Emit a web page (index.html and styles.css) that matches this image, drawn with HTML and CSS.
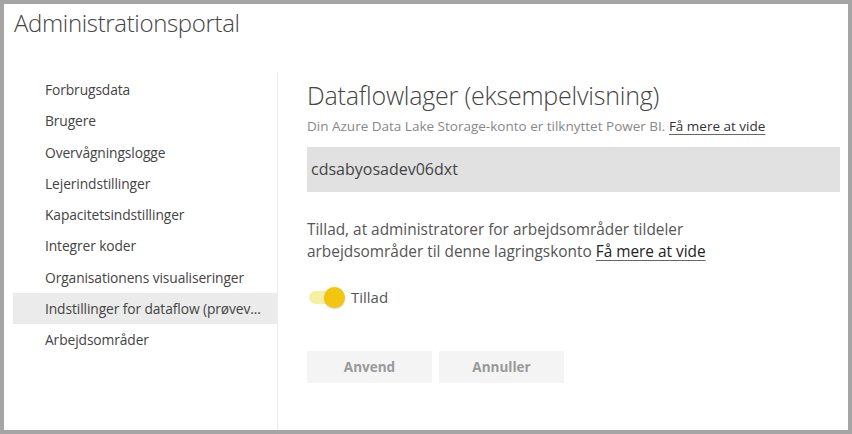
FILE: index.html
```html
<!DOCTYPE html>
<html lang="da">
<head>
<meta charset="utf-8">
<link rel="stylesheet" href="styles.css">
</head>
<body>
<div class="window">
  <header class="header">
    <h1 class="title">Administrationsportal</h1>
  </header>
  <div class="content">
    <nav class="sidebar">
      <ul class="nav">
        <li class="nav-item">Forbrugsdata</li>
        <li class="nav-item">Brugere</li>
        <li class="nav-item">Overvågningslogge</li>
        <li class="nav-item">Lejerindstillinger</li>
        <li class="nav-item">Kapacitetsindstillinger</li>
        <li class="nav-item">Integrer koder</li>
        <li class="nav-item">Organisationens visualiseringer</li>
        <li class="nav-item active">Indstillinger for dataflow (prøvev...</li>
        <li class="nav-item">Arbejdsområder</li>
      </ul>
    </nav>
    <main class="main">
      <h2 class="heading">Dataflowlager (eksempelvisning)</h2>
      <p class="subtitle">Din Azure Data Lake Storage-konto er tilknyttet Power BI. <a class="link">Få mere at vide</a></p>
      <div class="field">cdsabyosadev06dxt</div>
      <p class="desc">Tillad, at administratorer for arbejdsområder tildeler<br>arbejdsområder til denne lagringskonto <a class="link">Få mere at vide</a></p>
      <div class="toggle-row">
        <span class="toggle"><span class="track"></span><span class="knob"></span></span>
        <span class="toggle-label">Tillad</span>
      </div>
      <div class="buttons">
        <button class="btn">Anvend</button>
        <button class="btn">Annuller</button>
      </div>
    </main>
  </div>
</div>
</body>
</html>
```
FILE: styles.css
```css
* { box-sizing: border-box; }
html, body { margin: 0; padding: 0; }
body {
  width: 852px;
  height: 434px;
  background: #a5a5a5;
  padding: 4px;
  font-family: "Open Sans", "Noto Sans", sans-serif;
  overflow: hidden;
}
.window {
  background: #ffffff;
  width: 844px;
  height: 426px;
  display: flex;
  flex-direction: column;
}
.header {
  height: 68px;
  padding: 2px 0 0 10px;
}
.title {
  margin: 0;
  font-size: 24px;
  font-weight: 300;
  color: #444;
  letter-spacing: -0.35px;
}
.content {
  flex: 1;
  display: flex;
}
.sidebar {
  width: 274px;
  border-right: 1px solid #ededed;
  padding-top: 2px;
}
.nav {
  list-style: none;
  margin: 0;
  padding: 0 0 0 9px;
}
.nav-item {
  height: 31.25px;
  line-height: 31.25px;
  padding-left: 32px;
  font-size: 13.8px;
  color: #444;
  white-space: nowrap;
  letter-spacing: -0.1px;
}
.nav-item.active {
  background: #ebebeb;
}
.main {
  flex: 1;
  padding: 8px 8px 0 29px;
}
.heading {
  margin: 0;
  font-size: 25px;
  font-weight: 300;
  color: #444;
  line-height: 30px;
  letter-spacing: -0.2px;
}
.subtitle {
  margin: 7px 0 0;
  font-size: 13.5px;
  color: #888;
  line-height: 18px;
}
.link {
  color: #333;
  text-decoration: underline;
  text-underline-offset: 3px;
  text-decoration-color: #666;
}
.field {
  margin-top: 12px;
  height: 45px;
  background: #e1e1e1;
  padding-left: 4px;
  line-height: 45px;
  font-size: 16px;
  color: #444;
}
.desc {
  margin: 27px 0 0;
  font-size: 15.4px;
  line-height: 22px;
  color: #555;
}
.desc .link { color: #222; }
.toggle-row {
  margin-top: 23px;
  display: flex;
  align-items: center;
  gap: 5px;
  height: 22px;
}
.toggle {
  position: relative;
  width: 39px;
  height: 21px;
  display: inline-block;
}
.track {
  position: absolute;
  left: 2px;
  top: 4px;
  width: 30px;
  height: 13px;
  border-radius: 7px;
  background: #f7f0a3;
}
.knob {
  position: absolute;
  left: 17px;
  top: 0;
  width: 21px;
  height: 21px;
  border-radius: 50%;
  background: #f2c50f;
  box-shadow: 0 1px 2px rgba(0,0,0,0.2);
}
.toggle-label {
  font-size: 15px;
  color: #555;
}
.buttons {
  margin-top: 43px;
  display: flex;
  gap: 7px;
}
.btn {
  width: 125px;
  height: 32px;
  border: none;
  background: #f4f4f4;
  color: #999;
  font-family: "Open Sans", "Noto Sans", sans-serif;
  font-weight: 700;
  font-size: 13.5px;
}
```
